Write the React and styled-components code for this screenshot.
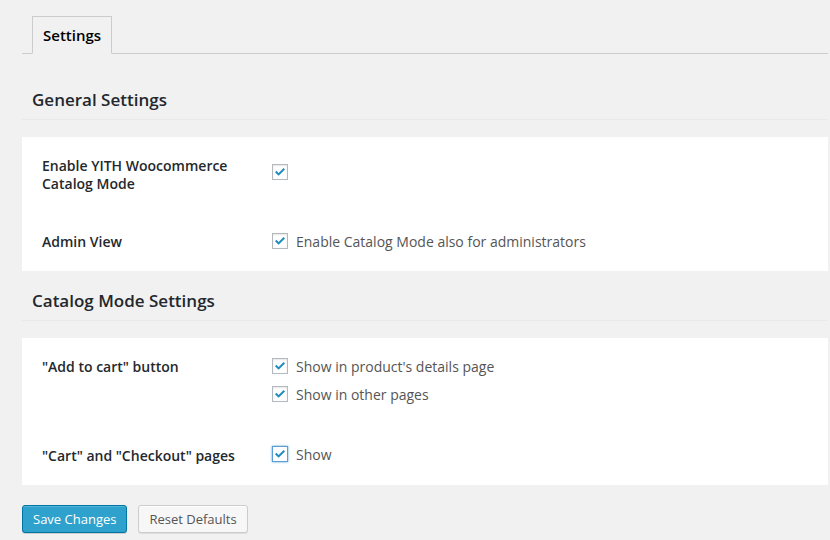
import React from "react";
import styled, { createGlobalStyle } from "styled-components";

const GlobalStyle = createGlobalStyle`
  body {
    margin: 0;
    background: #f1f1f1;
    font-family: "Open Sans", "Liberation Sans", sans-serif;
    color: #444;
  }
`;

const Wrap = styled.div`
  padding: 16px 2px 20px 22px;
`;

const TabBar = styled.div`
  display: flex;
  padding-left: 10px;
  border-bottom: 1px solid #ccc;
`;

const Tab = styled.div`
  padding: 6px 10px;
  margin-bottom: -1px;
  font-size: 15px;
  line-height: 24px;
  font-weight: 600;
  color: #000;
  background: #f1f1f1;
  border: 1px solid #ccc;
  border-bottom-color: #f1f1f1;
`;

const Heading = styled.h3`
  margin: ${({ $first }) => ($first ? "34px" : "18px")} 0 17px;
  padding: 0 10px 7px;
  font-size: 17px;
  line-height: 24px;
  font-weight: 600;
  color: #23282d;
  border-bottom: 1px solid #e9e9e9;
`;

const Panel = styled.div`
  background: #fff;
  padding: 0 20px;
`;

const Row = styled.div`
  display: flex;
  align-items: flex-start;
`;

const Label = styled.div`
  width: 220px;
  padding: ${({ $top }) => $top}px 10px 20px 0;
  font-size: 14px;
  line-height: 18px;
  font-weight: 600;
  color: #23282d;
`;

const Control = styled.div`
  display: flex;
  flex-direction: column;
  padding: ${({ $top }) => $top}px 0 ${({ $bottom }) => $bottom}px;
`;

const Option = styled.label`
  display: flex;
  align-items: center;
  height: 28px;
  font-size: 14px;
  color: #555;
`;

const Box = styled.span`
  display: flex;
  align-items: center;
  justify-content: center;
  width: 14px;
  height: 14px;
  margin-right: 8px;
  background: #fff;
  border: 1px solid ${({ $focus }) => ($focus ? "#5b9dd9" : "#b4b9be")};
  box-shadow: ${({ $focus }) =>
    $focus
      ? "0 0 2px rgba(30, 140, 190, 0.8)"
      : "inset 0 1px 2px rgba(0, 0, 0, 0.1)"};
`;

const Actions = styled.div`
  display: flex;
  gap: 11px;
  margin-top: 20px;
`;

const Button = styled.button`
  height: 28px;
  padding: 0 10px 1px;
  font-family: inherit;
  font-size: 13px;
  line-height: 26px;
  border-radius: 3px;
  border: 1px solid ${({ $primary }) => ($primary ? "#0074a2" : "#ccc")};
  background: ${({ $primary }) => ($primary ? "#2ea2cc" : "#f7f7f7")};
  color: ${({ $primary }) => ($primary ? "#fff" : "#555")};
  box-shadow: ${({ $primary }) =>
    $primary
      ? "inset 0 1px 0 rgba(120, 200, 230, 0.5), 0 1px 0 rgba(0, 0, 0, 0.15)"
      : "inset 0 1px 0 #fff, 0 1px 0 rgba(0, 0, 0, 0.08)"};
`;

const Check = ({ focus }) => (
  <Box $focus={focus}>
    <svg width="12" height="12" viewBox="0 0 12 12">
      <path d="M1 6.2 L2.4 4.8 L4.6 7 L9.6 2 L11 3.4 L4.6 9.8 Z" fill="#1e8cbe" />
    </svg>
  </Box>
);

const sections = [
  {
    title: "General Settings",
    rows: [
      { label: ["Enable YITH Woocommerce", "Catalog Mode"], top: 21, options: [""] },
      { label: ["Admin View"], top: 14, options: ["Enable Catalog Mode also for administrators"] },
    ],
  },
  {
    title: "Catalog Mode Settings",
    rows: [
      {
        label: ['"Add to cart" button'],
        top: 14,
        options: ["Show in product's details page", "Show in other pages"],
        bottom: 18,
      },
      { label: ['"Cart" and "Checkout" pages'], top: 14, labelTop: 21, options: ["Show"], focus: true },
    ],
  },
];

export default function App() {
  return (
    <>
      <GlobalStyle />
      <Wrap>
        <TabBar>
          <Tab>Settings</Tab>
        </TabBar>
        {sections.map((s, i) => (
          <div key={s.title}>
            <Heading $first={i === 0}>{s.title}</Heading>
            <Panel>
              {s.rows.map((r) => (
                <Row key={r.label[0]}>
                  <Label $top={r.labelTop || 20}>
                    {r.label.map((l) => (
                      <div key={l}>{l}</div>
                    ))}
                  </Label>
                  <Control $top={r.top} $bottom={r.bottom || 16}>
                    {r.options.map((o) => (
                      <Option key={o}>
                        <Check focus={r.focus} />
                        {o}
                      </Option>
                    ))}
                  </Control>
                </Row>
              ))}
            </Panel>
          </div>
        ))}
        <Actions>
          <Button $primary>Save Changes</Button>
          <Button>Reset Defaults</Button>
        </Actions>
      </Wrap>
    </>
  );
}
